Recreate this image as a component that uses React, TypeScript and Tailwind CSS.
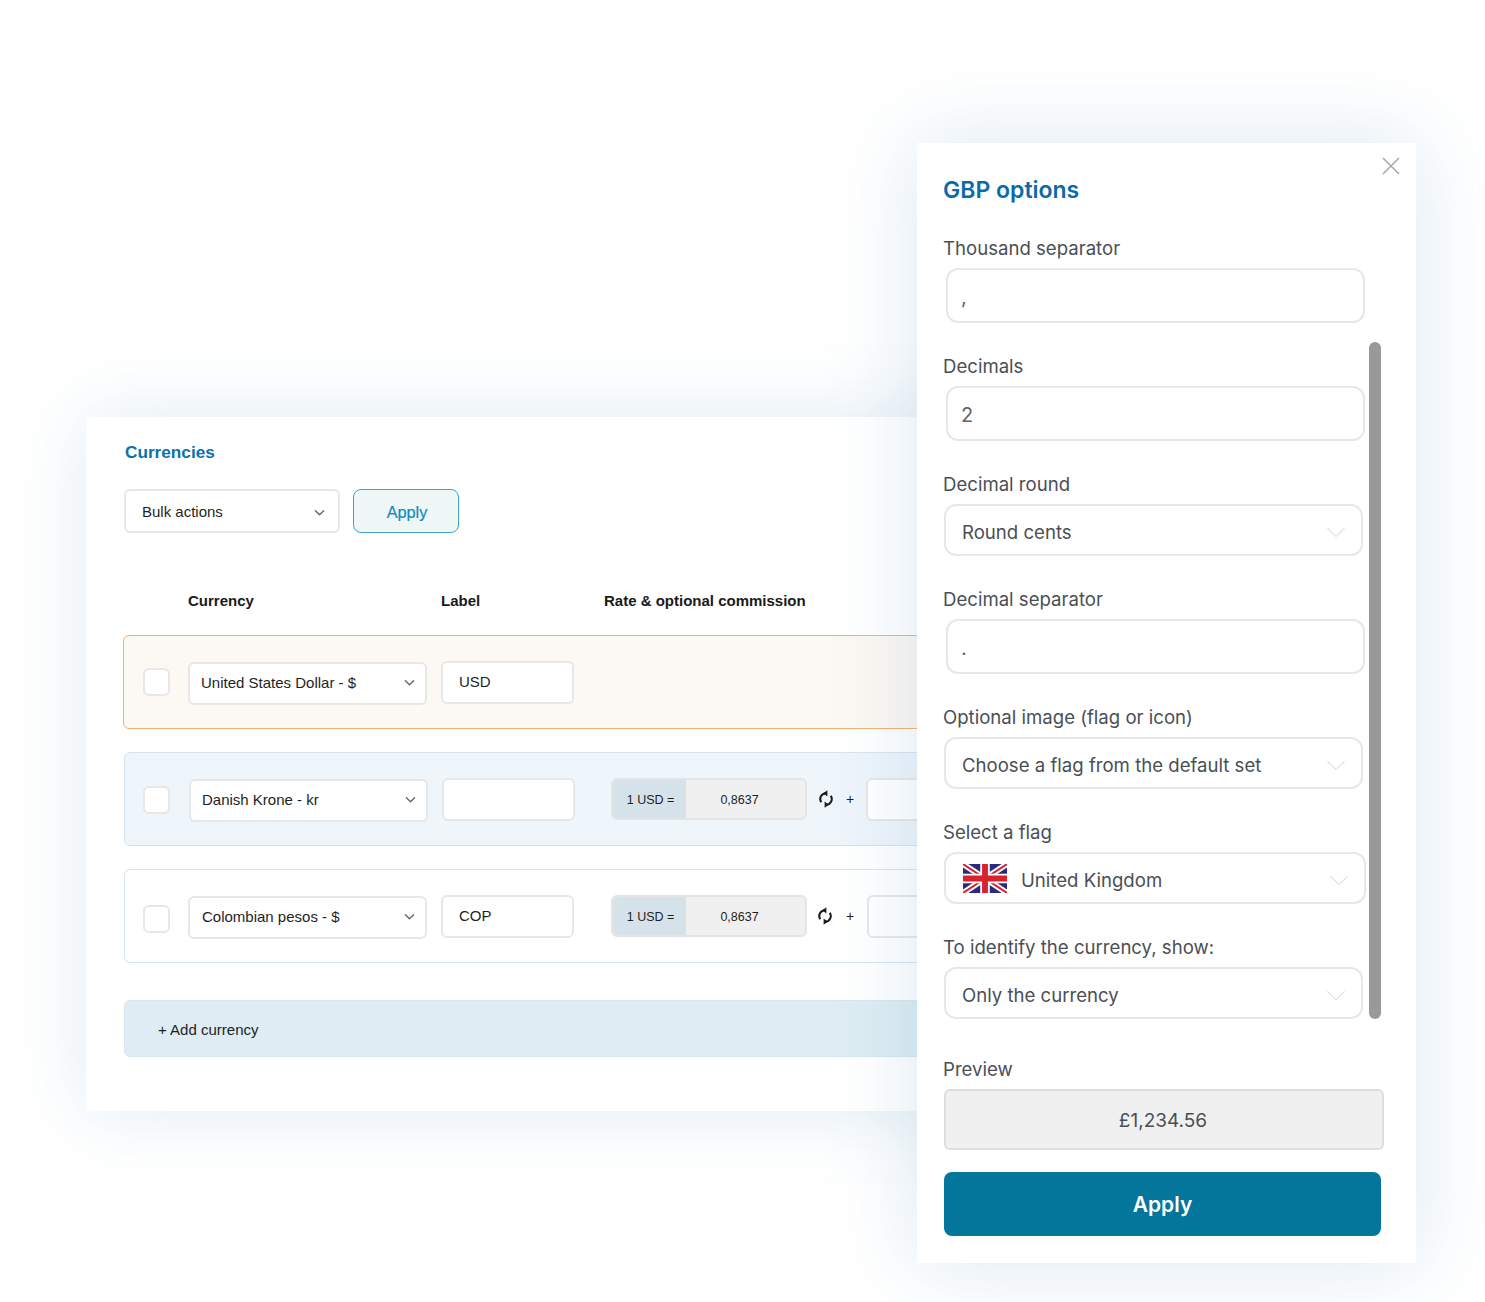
import React from "react";

const sans = "[font-family:'Liberation_Sans',Arial,sans-serif]";

function Chevron({ className }: { className?: string }) {
  return (
    <svg viewBox="0 0 12 8" className={className} fill="none" stroke="currentColor" strokeWidth="1.5" strokeLinecap="round" strokeLinejoin="round">
      <path d="M1.5 1.5 6 6l4.5-4.5" />
    </svg>
  );
}

function ThinChevron({ className }: { className?: string }) {
  return (
    <svg viewBox="0 0 20 12" className={className} fill="none" stroke="currentColor" strokeWidth="1" strokeLinecap="round" strokeLinejoin="round">
      <path d="M1 1.5 10 10.5 19 1.5" />
    </svg>
  );
}

function SyncIcon() {
  return (
    <svg viewBox="0 0 16 18" className="h-[18px] w-4 text-[#1c1c1c]" fill="none" stroke="currentColor" strokeWidth="2">
      <path d="M8 3.2A5.8 5.8 0 0 0 3.2 12.2" />
      <path d="M8 14.8A5.8 5.8 0 0 0 12.8 5.8" />
      <path d="M9.4 0.2v6.2L5.2 3.3Z" fill="currentColor" stroke="none" />
      <path d="M6.6 11.6v6.2l4.2-3.1Z" fill="currentColor" stroke="none" />
    </svg>
  );
}

function Flag() {
  return (
    <svg viewBox="0 0 60 40" className="ml-px mt-px h-[29px] w-[44px]" preserveAspectRatio="none">
      <rect width="60" height="40" fill="#2b2a7f" />
      <path d="M0 0 60 40M60 0 0 40" stroke="#fff" strokeWidth="8" />
      <path d="M0 0 60 40M60 0 0 40" stroke="#d8232f" strokeWidth="2.6" />
      <path d="M30 0v40M0 20h60" stroke="#fff" strokeWidth="13" />
      <path d="M30 0v40M0 20h60" stroke="#d8232f" strokeWidth="8" />
    </svg>
  );
}

function CurrencySelect({ label, className }: { label: string; className: string }) {
  return (
    <div className={`flex h-[43px] w-[239px] items-center justify-between rounded-md border-2 border-[#e7e7e7] bg-white pr-[10px] text-[15px] text-[#1f1f1f] ${className}`}>
      <span>{label}</span>
      <Chevron className="h-2 w-[11px] text-[#666]" />
    </div>
  );
}

function RateBox() {
  return (
    <div className="flex h-[42px] w-[196px] overflow-hidden rounded-md border-2 border-[#e4e4e4] pt-0 text-[12.5px] text-[#1f1f1f]">
      <div className="flex w-[73px] items-center justify-center bg-[#d6e2ea] pl-0.5 pt-[2px]">1 USD =</div>
      <div className="flex flex-1 items-center justify-center bg-[#f0f0f0] pr-3 pt-[2px]">0,8637</div>
    </div>
  );
}

function LabelInput({ value }: { value?: string }) {
  return (
    <div className="flex h-[43px] w-[133px] items-center rounded-md border-2 border-[#e7e7e7] bg-white pl-4 text-[15px] text-[#1f1f1f]">
      {value}
    </div>
  );
}

function Field({ label, className, children }: { label: string; className: string; children: React.ReactNode }) {
  return (
    <div className={className}>
      <div className="-ml-px mb-2 h-6 text-[18.6px] leading-6 text-[#4a4f55]">{label}</div>
      {children}
    </div>
  );
}

function TextBox({ value }: { value: string }) {
  return (
    <div className="ml-0.5 flex h-[55px] w-[419px] items-center rounded-[12px] border-2 border-[#e7e7e7] bg-white pl-[13px] pt-0.5 text-[20px] text-[#6a5f62]">
      {value}
    </div>
  );
}

function SelectText({ children }: { children: React.ReactNode }) {
  return <span className="pt-1.5">{children}</span>;
}

function SelectBox({ className, children }: { className: string; children: React.ReactNode }) {
  return (
    <div className={`flex h-[52px] items-center justify-between rounded-[12px] border-2 border-[#e7e7e7] bg-white pl-4 pr-[15px] text-[18.6px] text-[#4a4f55] ${className}`}>
      <div className="flex items-center">{children}</div>
      <ThinChevron className="mt-1 h-[11px] w-5 text-[#c9cdd1]" />
    </div>
  );
}

export default function App() {
  return (
    <div className="relative h-[1302px] w-[1485px] overflow-hidden bg-white">
      {/* Currencies window */}
      <section className={`absolute left-[86px] top-[417px] h-[694px] w-[930px] bg-white pl-[38px] pt-[24px] shadow-[0_0_70px_rgba(90,150,190,0.18)] ${sans}`}>
        <h2 className="ml-px h-[22px] text-[17.2px] font-bold leading-[22px] text-[#0873ad]">Currencies</h2>
        <div className="mt-[26px] flex gap-[13px]">
          <div className="flex h-[44px] w-[216px] items-center justify-between rounded-md border-2 border-[#e7e7e7] bg-white pl-4 pr-[13px] pt-[3px] text-[15px] text-[#1f1f1f]">
            <span>Bulk actions</span>
            <Chevron className="h-2 w-[11px] text-[#666]" />
          </div>
          <div className="flex h-[44px] w-[106px] items-center justify-center rounded-lg border-[1.5px] border-[#3ba3cc] bg-[#eff6f6] pl-0.5 pt-[3px] text-[16.3px] text-[#0a8dbd] [-webkit-text-stroke:0.2px_#0a8dbd]">
            Apply
          </div>
        </div>

        <div className="mt-[58px] flex h-[20px] text-[15px] font-bold leading-5 text-[#1a1a1a]">
          <span className="ml-[64px] w-[253px]">Currency</span>
          <span className="w-[163px]">Label</span>
          <span>Rate &amp; optional commission</span>
        </div>

        <div className="-ml-px mt-6 flex h-[94px] items-center rounded-md border border-[#f0b36f] bg-[#fcf8f3] pl-[19px]">
          <div className="h-[28px] w-[27px] rounded-md border-2 border-[#e7e7e7] bg-white" />
          <CurrencySelect label="United States Dollar - $" className="ml-[18px] mt-[2px] pl-[11px]" />
          <div className="ml-[14px]"><LabelInput value="USD" /></div>
        </div>

        <div className="mt-[23px] flex h-[94px] items-center rounded-md border border-[#d6e3ec] bg-[#eef5fb] pl-[18px]">
          <div className="mt-[2px] h-[28px] w-[27px] rounded-md border-2 border-[#e7e7e7] bg-white" />
          <CurrencySelect label="Danish Krone - kr" className="ml-[19px] mt-[2px] pl-[11px]" />
          <div className="ml-[14px]"><LabelInput /></div>
          <div className="ml-9"><RateBox /></div>
          <div className="ml-[11px]"><SyncIcon /></div>
          <span className="ml-[12px] text-[14px] text-[#1f1f1f]">+</span>
          <div className="ml-3 h-[43px] w-20 rounded-md border-2 border-[#e7e7e7] bg-white" />
        </div>

        <div className="mt-[23px] flex h-[94px] items-center rounded-md border border-[#d6e3ec] bg-white pl-[18px]">
          <div className="mt-[5px] h-[28px] w-[27px] rounded-md border-2 border-[#e7e7e7] bg-white" />
          <CurrencySelect label="Colombian pesos - $" className="ml-[18px] mt-[2px] pl-3" />
          <div className="ml-[14px]"><LabelInput value="COP" /></div>
          <div className="ml-[37px]"><RateBox /></div>
          <div className="ml-[10px]"><SyncIcon /></div>
          <span className="ml-[13px] text-[14px] text-[#1f1f1f]">+</span>
          <div className="ml-[13px] h-[43px] w-20 rounded-md border-2 border-[#e7e7e7] bg-white" />
        </div>

        <div className="mt-[37px] flex h-[57px] items-center rounded-md border border-[#d8e6ee] bg-[#deedf3] pl-[33px] pt-[3px] text-[15px] text-[#1f1f1f]">
          + Add currency
        </div>
      </section>

      {/* GBP options window */}
      <section className="absolute left-[917px] top-[143px] h-[1120px] w-[499px] bg-white pl-[27px] pt-[31px] font-['Inter',sans-serif] shadow-[0_0_80px_rgba(90,150,190,0.22)]">
        <svg viewBox="0 0 20 20" className="absolute right-[15px] top-[13px] h-5 w-5 text-[#a9a9a9]" fill="none" stroke="currentColor" strokeWidth="1.6">
          <path d="M2 2 18 18M18 2 2 18" />
        </svg>
        <div className="absolute left-[452px] top-[199px] h-[677px] w-3 rounded-md bg-[#999999]" />

        <h2 className="-ml-px h-8 text-[23px] font-semibold leading-8 text-[#0b6aa8]">GBP options</h2>

        <Field label="Thousand separator" className="mt-[30px]"><TextBox value="," /></Field>
        <Field label="Decimals" className="mt-[31px]"><TextBox value="2" /></Field>
        <Field label="Decimal round" className="mt-[31px]"><SelectBox className="w-[419px]"><SelectText>Round cents</SelectText></SelectBox></Field>
        <Field label="Decimal separator" className="mt-[31px]"><TextBox value="." /></Field>
        <Field label="Optional image (flag or icon)" className="mt-[31px]"><SelectBox className="w-[419px]"><SelectText>Choose a flag from the default set</SelectText></SelectBox></Field>
        <Field label="Select a flag" className="mt-[31px]">
          <SelectBox className="w-[422px]">
            <Flag />
            <span className="ml-[14px] pt-1.5">United Kingdom</span>
          </SelectBox>
        </Field>
        <Field label="To identify the currency, show:" className="mt-[31px]"><SelectBox className="w-[419px]"><SelectText>Only the currency</SelectText></SelectBox></Field>
        <Field label="Preview" className="mt-[38px]">
          <div className="flex h-[61px] w-[440px] items-center justify-center rounded-md border-2 border-[#dddddd] bg-[#f0f0f0] pr-0.5 pt-1 text-[19px] text-[#4a4f55]">
            £1,234.56
          </div>
        </Field>
        <div className="mt-[22px] flex h-16 w-[437px] items-center justify-center rounded-lg bg-[#04759b] pt-0.5 text-[21px] font-semibold text-white">
          Apply
        </div>
      </section>
    </div>
  );
}
